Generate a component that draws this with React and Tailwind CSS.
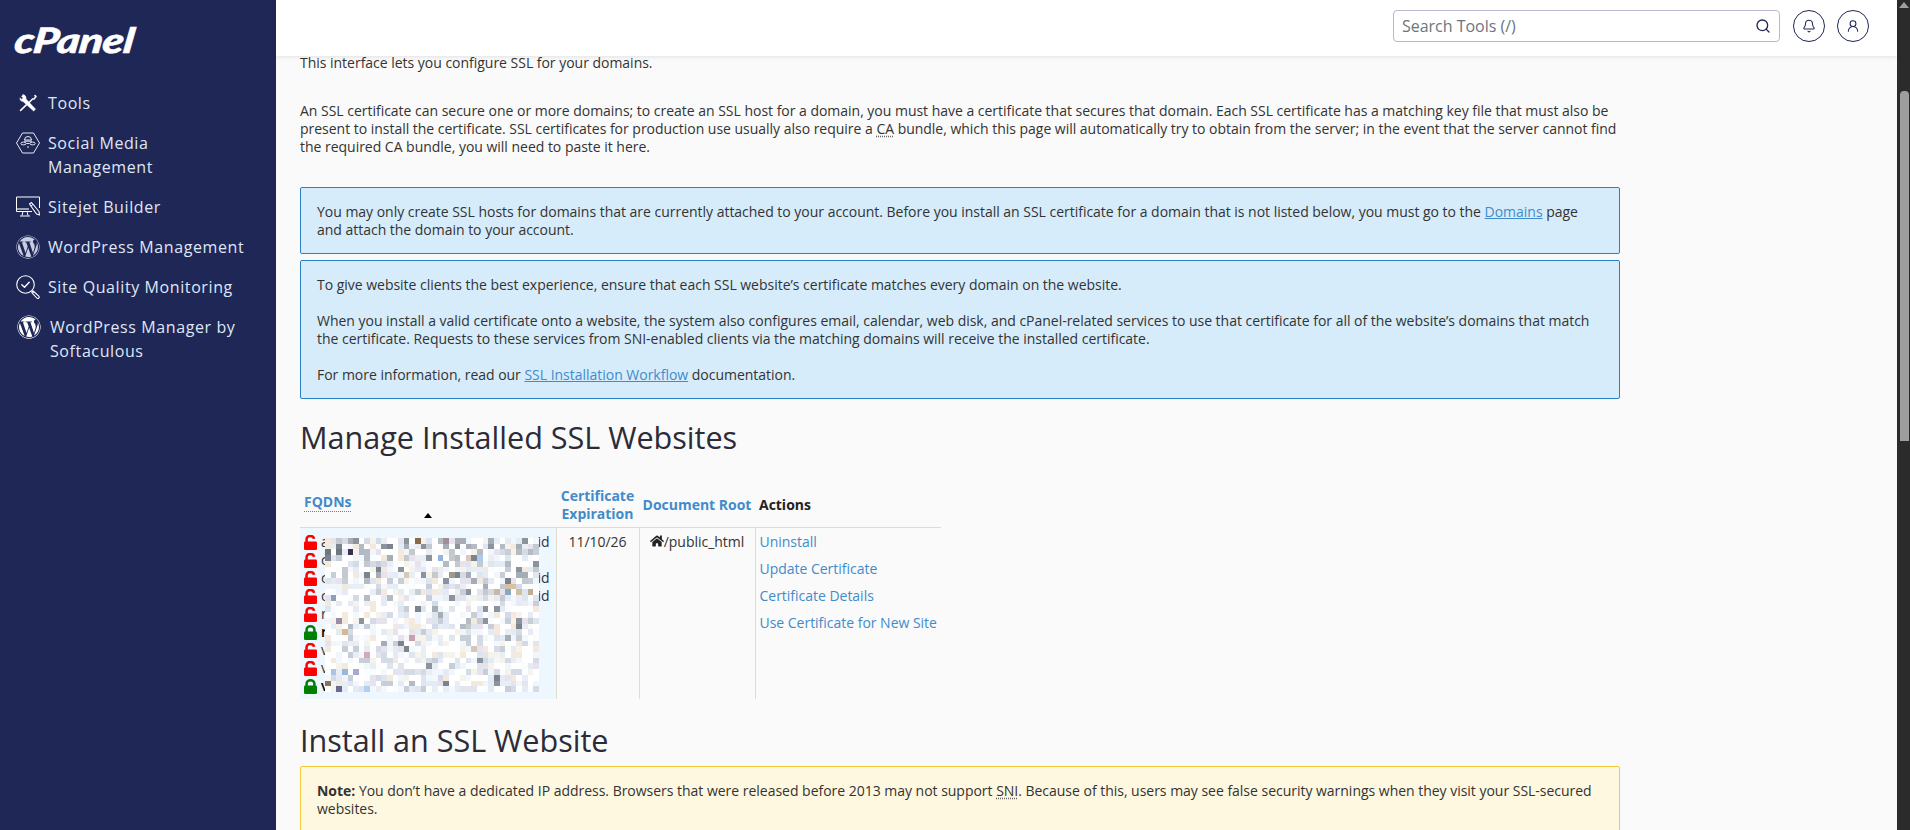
import React from 'react';
import { Bell, Search, UserRound } from 'lucide-react';
import { FaHome, FaWordpress } from 'react-icons/fa';

const ToolsIcon = () => (
  <svg viewBox="0 0 18 18" className="h-[18px] w-[18px]" fill="none" stroke="#fff" strokeLinecap="round" strokeLinejoin="round">
    <path d="M16 1.6 L17 2.6 L15 5 L13.6 5 L9.8 8.8 M7.6 10.6 L1.6 16.4" strokeWidth="1.5" />
    <path d="M4 0.8 L2.6 2.4 L4.2 4 L2.4 5.4 L1 3.8 C0.6 5.8 1.8 7.4 4 7.4 L14.6 17 L16.6 15.2 L7 5 C7.4 2.8 6 0.6 4 0.8 Z" fill="#fff" strokeWidth="0.5" />
  </svg>
);

const SocialIcon = () => (
  <svg viewBox="0 0 24 22" className="h-[22px] w-6" fill="none" stroke="#fff" strokeWidth="0.9" strokeLinejoin="round">
    <path d="M6.5 1 H17.5 L23.5 11 L17.5 21 H6.5 L0.5 11 Z" />
    <path d="M8.5 8 a3.5 3.5 0 0 1 7 0 Z" />
    <ellipse cx="7.5" cy="11.5" rx="2.6" ry="1.4" />
    <ellipse cx="16.5" cy="11.5" rx="2.6" ry="1.4" />
    <path d="M10.5 11.5 H13.5 M11 15 H13 M8 9.2 H16" />
  </svg>
);

const SitejetIcon = () => (
  <svg viewBox="0 0 24 22" className="h-[22px] w-6" fill="none" stroke="#fff" strokeWidth="1" strokeLinejoin="round">
    <path d="M16 15.5 H0.5 V1 H23.5 V12" />
    <path d="M0.5 13 H13" strokeWidth="1.6" opacity="0.7" />
    <path d="M7 15.5 L6 19.5 M11 15.5 L12 19.5 M4 20 H14" />
    <path d="M13.5 8 L15.5 6.5 L23 15.5 L23.5 19 L20.5 18 Z" fill="#1f2756" strokeWidth="1.1" />
    <path d="M15 10 L17 8.5" />
  </svg>
);

const QualityIcon = () => (
  <svg viewBox="0 0 24 24" className="h-6 w-6" fill="none" stroke="#fff" strokeWidth="1.1" strokeLinecap="round" strokeLinejoin="round">
    <circle cx="9.5" cy="9.5" r="8.8" />
    <path d="M5.8 9.8 L8.5 12.2 L13.2 7.2" strokeWidth="1.4" />
    <path d="M16 16 L17.5 17.2 M17.2 16 L22.8 21.2 a1.3 1.3 0 0 1 -2 1.8 L15.8 17.6 Z" />
  </svg>
);

const LockIcon = ({ open }) => (
  <svg viewBox="0 0 13 15" className="h-[15px] w-[13px] shrink-0" fill="none">
    <rect x="0" y="6.5" width="13" height="8.5" rx="1.2" fill={open ? '#ff0000' : '#008000'} />
    <path d={open ? 'M2.6 7 V4.4 a3.7 3.2 0 0 1 7.4 -0.6' : 'M2.6 7 V4.6 a3.9 3.3 0 0 1 7.8 0 V7'} stroke={open ? '#ff0000' : '#008000'} strokeWidth="2.5" />
  </svg>
);

const navItems = [
  { label: <>Tools</>, icon: <ToolsIcon /> },
  { label: <>Social Media<br />Management</>, icon: <SocialIcon /> },
  { label: <>Sitejet Builder</>, icon: <SitejetIcon /> },
  { label: <>WordPress Management</>, icon: <FaWordpress className="h-6 w-6 text-[#c9cee0]" /> },
  { label: <>Site Quality Monitoring</>, icon: <QualityIcon /> },
];

const fqdnRows = [
  { letter: 'a', open: true, id: true },
  { letter: 'c', open: true },
  { letter: 'c', open: true, id: true },
  { letter: 'c', open: true, id: true },
  { letter: 'r', open: true },
  { letter: 'r', open: false },
  { letter: 'v', open: true },
  { letter: 'v', open: true },
  { letter: 'v', open: false },
];

// blurred out domain names, colours are only roughly what the shot has
const mosaicColors = ['#ffffff', '#ffffff', '#ffffff', '#fbfcfe', '#f4f7fb', '#e9eef5', '#dfe5ee', '#f0f6fc', '#ffffff', '#d5dbe6', '#c8ced8', '#f6f3ea', '#f3e9dc', '#e4ebf5', '#e6e2ee', '#ffffff'];
const mosaicDark = ['#8c939c', '#a7adb6', '#7d838c', '#b4bbc2', '#c3c9cc'];
const mosaicSpots = { '16,0': '#8a6a4c', '21,0': '#a58a9a', '4,2': '#3e2f52', '0,2': '#707680', '2,2': '#6f7680', '6,2': '#a9bad6', '20,3': '#8fb6de', '25,3': '#e0c8b8', '27,3': '#a8ccf0', '14,6': '#d8c8b8', '22,6': '#a09888', '32,8': '#d8c0a0', '33,8': '#d8c0a0', '34,9': '#d4bca0', '36,9': '#c0ac94', '32,9': '#88a8c0', '1,10': '#88a0b8', '30,9': '#c8b8a8', '2,14': '#9c8ea8', '3,16': '#d8b890', '7,20': '#d8a8b8', '15,17': '#c8a0b0', '26,19': '#d0c8b8', '1,23': '#a8c4e0', '3,23': '#98b8dc', '5,23': '#a8a8d8', '0,25': '#8c7458', '2,26': '#686c90', '21,25': '#7c8090', '7,26': '#b0d0f0' };
const mosaicCells = [];
let mosaicSeed = 7;
for (let row = 0; row < 27; row++) {
  for (let col = 0; col < 38; col++) {
    mosaicSeed = (mosaicSeed * 1103515245 + 12345) % 2147483648;
    const pick = Math.floor(mosaicSeed / 65536);
    const dark = row < 2 ? pick % 3 === 0 : row < 8 ? pick % 6 === 0 : pick % 22 === 0;
    const color = mosaicSpots[`${col},${row}`] || (dark ? mosaicDark[pick % mosaicDark.length] : mosaicColors[pick % mosaicColors.length]);
    mosaicCells.push({ row, col, color });
  }
}

const Mosaic = () => (
  <svg viewBox="0 0 38 27" preserveAspectRatio="none" shapeRendering="crispEdges" className="absolute left-[25px] top-[10px] h-[154px] w-[214px]">
    {mosaicCells.map((cell) => (
      <rect key={`${cell.row}-${cell.col}`} x={cell.col} y={cell.row} width="1" height="1" fill={cell.color} />
    ))}
  </svg>
);

const Abbr = ({ children }) => <span className="underline decoration-dotted decoration-[#666] underline-offset-2">{children}</span>;
const TextLink = ({ children }) => <a href="#" className="text-[#428bca] underline">{children}</a>;

export default function App() {
  return (
    <div className="flex h-screen w-full overflow-hidden bg-[#fafafa] font-['Open_Sans',sans-serif] text-[14px] leading-[18px] tracking-[-0.02px] text-[#333]">
      <aside className="flex w-[276px] shrink-0 flex-col bg-[#1f2756] text-[#dfe6f5]">
        <div className="h-[91px] pl-[15px] pt-[19px]">
          <span className="inline-block origin-left -skew-x-6 scale-x-125 font-['Lato',sans-serif] text-[35px] font-black italic leading-[40px] tracking-[-0.5px] text-white [-webkit-text-stroke:0.5px_white]">cPanel</span>
        </div>
        <nav className="flex flex-col gap-4 pl-4 text-[16px] leading-6 tracking-[0.6px]">
          {navItems.map((item, index) => (
            <a key={index} href="#" className="flex items-start gap-2">
              <span className="flex h-6 w-6 shrink-0 items-center justify-center">{item.icon}</span>
              <span>{item.label}</span>
            </a>
          ))}
          <a href="#" className="flex items-start gap-[9px] pl-px">
            <span className="h-6 w-6 shrink-0"><FaWordpress className="h-6 w-6 text-white" /></span>
            <span>WordPress Manager by<br />Softaculous</span>
          </a>
        </nav>
      </aside>

      <div className="flex min-w-0 flex-1 flex-col">
        <header className="relative z-10 flex h-14 shrink-0 items-start justify-end bg-white pr-[28px] pt-[10px] shadow-[0_1px_4px_rgba(0,0,0,0.1)]">
          <div className="flex h-8 w-[387px] items-center justify-between rounded border border-[#b9b9cc] pl-2 pr-[8px] text-[16px] text-[#6c757d]">
            <span>Search Tools (/)</span>
            <Search className="h-4 w-4 text-[#1f2756]" strokeWidth={2} />
          </div>
          <button className="ml-[13px] flex h-8 w-8 items-center justify-center rounded-full border border-[#1f2756] text-[#1f2756]">
            <Bell className="h-[14px] w-[14px]" strokeWidth={1.8} />
          </button>
          <button className="ml-[12px] flex h-8 w-8 items-center justify-center rounded-full border border-[#1f2756] text-[#1f2756]">
            <UserRound className="h-[14px] w-[14px]" strokeWidth={1.8} />
          </button>
        </header>

        <main className="-mt-[2px] flex-1 overflow-hidden px-6">
          <div className="w-[1320px]">
            <p>This interface lets you configure SSL for your domains.</p>
            <p className="mt-[30px]">
              An SSL certificate can secure one or more domains; to create an SSL host for a domain, you must have a certificate that secures that domain. Each SSL certificate has a matching key file that must also be present to install the certificate. SSL certificates for production use usually also require a <Abbr>CA</Abbr> bundle, which this page will automatically try to obtain from the server; in the event that the server cannot find the required CA bundle, you will need to paste it here.
            </p>

            <div className="mt-[31px] rounded-[2px] border border-[#2b7fc3] bg-[#d6ecfa] px-4 pb-[14px] pt-[15px]">
              You may only create SSL hosts for domains that are currently attached to your account. Before you install an SSL certificate for a domain that is not listed below, you must go to the <TextLink>Domains</TextLink> page and attach the domain to your account.
            </div>
            <div className="mt-[6px] rounded-[2px] border border-[#2b7fc3] bg-[#d6ecfa] px-4 pb-[14px] pt-[15px]">
              <p>To give website clients the best experience, ensure that each SSL website’s certificate matches every domain on the website.</p>
              <p className="mt-[18px]">When you install a valid certificate onto a website, the system also configures email, calendar, web disk, and cPanel-related services to use that certificate for all of the website’s domains that match the certificate. Requests to these services from SNI-enabled clients via the matching domains will receive the installed certificate.</p>
              <p className="mt-[18px]">For more information, read our <TextLink>SSL Installation Workflow</TextLink> documentation.</p>
            </div>

            <h1 className="mt-[18px] text-[30.6px] font-normal leading-[40px] text-[#2c2c38]">Manage Installed SSL Websites</h1>

            <table className="mt-[30px] table-fixed border-collapse">
              <colgroup>
                <col className="w-[256px]" />
                <col className="w-[83px]" />
                <col className="w-[116px]" />
                <col className="w-[186px]" />
              </colgroup>
              <thead>
                <tr className="border-b border-[#deded0] font-bold">
                  <th className="px-1 pb-1 text-left align-bottom">
                    <div className="relative h-[36px]">
                      <span className="absolute left-0 top-[6px] border-b border-dotted border-[#428bca] text-[#428bca]">FQDNs</span>
                      <span className="absolute left-[120px] top-[26px] h-0 w-0 border-x-[4px] border-b-[5px] border-x-transparent border-b-black" />
                    </div>
                  </th>
                  <th className="pb-1 text-center align-bottom text-[#428bca]">Certificate<br />Expiration</th>
                  <th className="pb-[13px] text-center align-bottom whitespace-nowrap text-[#428bca]">Document Root</th>
                  <th className="px-1 pb-[13px] text-left align-bottom text-[#222]">Actions</th>
                </tr>
              </thead>
              <tbody>
                <tr>
                  <td className="bg-[#eef6fe] p-0 align-top">
                    <div className="relative h-[171px] pl-1 pt-[5px]">
                      {fqdnRows.map((row, index) => (
                        <div key={index} className="flex h-[18px] items-center gap-[4px] pr-[6px]">
                          <LockIcon open={row.open} />
                          <span className={row.open ? '' : 'font-semibold text-black'}>{row.letter}</span>
                          {row.id ? <span className="ml-auto">id</span> : null}
                        </div>
                      ))}
                      <Mosaic />
                    </div>
                  </td>
                  <td className="border-l border-[#deded0] pt-[5px] text-center align-top">11/10/26</td>
                  <td className="border-l border-[#deded0] pt-[5px] text-center align-top whitespace-nowrap">
                    <FaHome className="inline h-[14px] w-[14px] align-[-1px] text-[#222]" />/public_html
                  </td>
                  <td className="border-l border-[#deded0] px-1 pt-[5px] align-top whitespace-nowrap text-[#428bca]">
                    <div className="flex flex-col gap-[9px]">
                      <a href="#">Uninstall</a>
                      <a href="#">Update Certificate</a>
                      <a href="#">Certificate Details</a>
                      <a href="#">Use Certificate for New Site</a>
                    </div>
                  </td>
                </tr>
              </tbody>
            </table>

            <h1 className="mt-[21px] text-[30.6px] font-normal leading-[40px] text-[#2c2c38]">Install an SSL Website</h1>
            <div className="mt-[6px] rounded-[2px] border border-[#f5c83a] bg-[#fff8e1] px-4 pb-[14px] pt-[15px]">
              <strong>Note:</strong> You don’t have a dedicated IP address. Browsers that were released before 2013 may not support <Abbr>SNI</Abbr>. Because of this, users may see false security warnings when they visit your SSL-secured websites.
            </div>
          </div>
        </main>
      </div>

      <div className="flex w-[13px] shrink-0 flex-col items-center bg-[#2b2b2b]">
        <span className="mt-[2px] h-0 w-0 border-x-[5px] border-b-[6px] border-x-transparent border-b-[#a0a0a0]" />
        <span className="ml-[1px] mt-[83px] h-[350px] w-[9px] rounded-t-[4px] bg-[#9e9e9e]" />
      </div>
    </div>
  );
}
